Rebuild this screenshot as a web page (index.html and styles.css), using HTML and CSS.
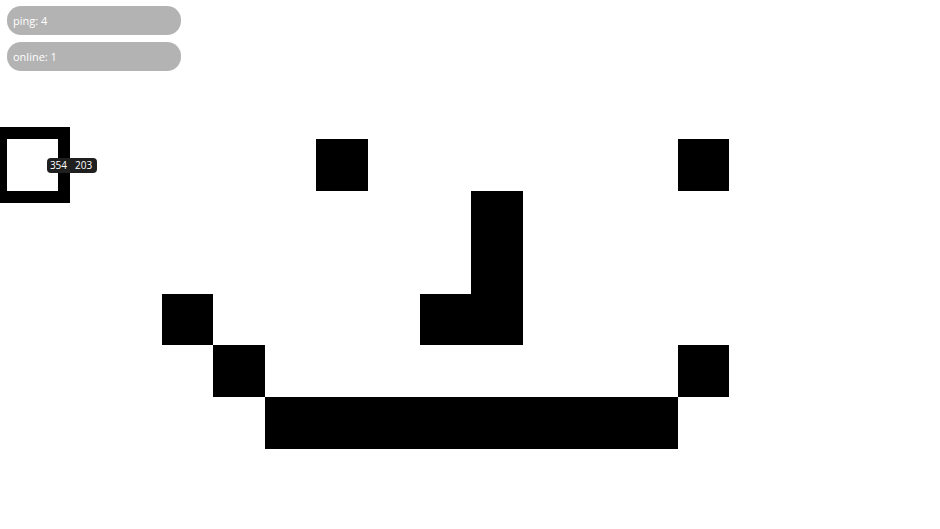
FILE: index.html
```html
<!DOCTYPE html>
<html>
<head>
<meta charset="utf-8">
<link rel="stylesheet" href="styles.css">
</head>
<body>
<div class="hud">
  <div class="pill">ping: 4</div>
  <div class="pill">online: 1</div>
</div>
<div class="board">
  <div class="cursor" style="grid-area: 1 / 1">
    <div class="coords"><span>354</span><span>203</span></div>
  </div>
  <div class="cell" style="grid-area: 1 / 7"></div>
  <div class="cell" style="grid-area: 1 / 14"></div>
  <div class="cell" style="grid-area: 2 / 10 / 5 / 11"></div>
  <div class="cell" style="grid-area: 4 / 9"></div>
  <div class="cell" style="grid-area: 4 / 4"></div>
  <div class="cell" style="grid-area: 5 / 5"></div>
  <div class="cell" style="grid-area: 6 / 6 / 7 / 14"></div>
  <div class="cell" style="grid-area: 5 / 14"></div>
</div>
</body>
</html>
```
FILE: styles.css
```css
html, body {
  margin: 0;
  padding: 0;
  background: #fff;
  width: 940px;
  height: 529px;
  overflow: hidden;
  font-family: "Open Sans", "Liberation Sans", sans-serif;
}
.hud {
  position: relative;
  z-index: 2;
  display: flex;
  flex-direction: column;
  gap: 7px;
  padding: 6px 0 0 7px;
}
.pill {
  width: 168px;
  height: 29px;
  padding-left: 6px;
  border-radius: 14px;
  background: #b3b3b3;
  color: #fff;
  font-size: 11px;
  line-height: 29px;
}
.board {
  position: absolute;
  left: 6.9px;
  top: 139px;
  display: grid;
  grid-template-columns: repeat(14, 51.6px);
  grid-template-rows: repeat(6, 51.6px);
}
.cell {
  background: #000;
}
.cursor {
  position: relative;
  outline: 12px solid #000;
}
.coords {
  position: absolute;
  left: 40px;
  top: 19px;
  display: flex;
  gap: 8px;
  height: 15px;
  padding: 0 5px 0 3px;
  border-radius: 4px;
  background: #1f1f1f;
  color: #fff;
  font-size: 10px;
  line-height: 15px;
}
```
